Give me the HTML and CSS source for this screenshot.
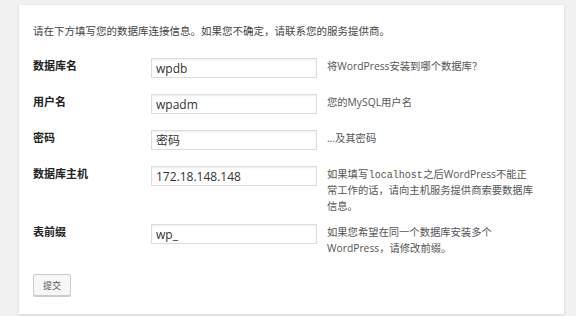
FILE: index.html
```html
<!DOCTYPE html>
<html lang="zh-CN">
<head>
    <meta charset="UTF-8">
    <title>WordPress › 安装配置文件</title>
    <link rel="stylesheet" href="styles.css">
</head>
<body>
    <div class="setup-box">
        <p class="intro">请在下方填写您的数据库连接信息。如果您不确定，请联系您的服务提供商。</p>

        <form class="setup-form">
            <div class="form-table">
                <label class="field-label" for="dbname">数据库名</label>
                <input class="field-input" id="dbname" type="text" value="wpdb">
                <div class="field-desc">将WordPress安装到哪个数据库？</div>

                <label class="field-label" for="uname">用户名</label>
                <input class="field-input" id="uname" type="text" value="wpadm">
                <div class="field-desc">您的MySQL用户名</div>

                <label class="field-label" for="pwd">密码</label>
                <input class="field-input" id="pwd" type="text" value="密码">
                <div class="field-desc">…及其密码</div>

                <label class="field-label" for="dbhost">数据库主机</label>
                <input class="field-input" id="dbhost" type="text" value="172.18.148.148">
                <div class="field-desc">如果填写<code>localhost</code>之后WordPress不能正常工作的话，请向主机服务提供商索要数据库信息。</div>

                <label class="field-label" for="prefix">表前缀</label>
                <input class="field-input" id="prefix" type="text" value="wp_">
                <div class="field-desc">如果您希望在同一个数据库安装多个WordPress，请修改前缀。</div>
            </div>

            <button class="submit-btn" type="submit">提交</button>
        </form>
    </div>
</body>
</html>
```

FILE: styles.css
```css
/* Page */
body {
    margin: 0;
    padding: 5px 12px 2px 19px;
    background-color: #f1f1f1;
    font-family: "Open Sans", "Noto Sans CJK SC", sans-serif;
    color: #444;
}

.setup-box {
    background-color: #fff;
    padding: 18px 14px 18px 14px;
    box-shadow: 0 1px 3px rgba(0,0,0,0.13);
    height: 273px;
}

.intro {
    margin: 0 0 19px 0;
    font-size: 10.5px;
    line-height: 16px;
    color: #444;
}

/* Form rows */
.form-table {
    display: grid;
    grid-template-columns: 108px 166px 207px;
    column-gap: 10px;
    row-gap: 10px;
    align-items: start;
}

.field-label {
    font-size: 11px;
    line-height: 16px;
    font-weight: bold;
    color: #222;
}

.field-input {
    box-sizing: border-box;
    width: 166px;
    height: 20px;
    margin: 0 0 6px 0;
    padding: 0 4px;
    border: 1px solid #ddd;
    box-shadow: inset 0 1px 2px rgba(0,0,0,0.07);
    font-family: "Open Sans", "Noto Sans CJK SC", sans-serif;
    font-size: 12px;
    color: #333;
    outline: none;
}

.field-desc {
    font-size: 10.3px;
    line-height: 16px;
    color: #555;
}

.field-desc code {
    margin: 0 0.5px;
    font-family: "Liberation Mono", "DejaVu Sans Mono", monospace;
    font-size: 10px;
    line-height: 1;
}

/* Button */
.submit-btn {
    margin-top: 18px;
    width: 38px;
    height: 22px;
    padding: 0;
    background: #f7f7f7;
    border: 1px solid #ccc;
    border-radius: 2px;
    box-shadow: 0 1px 0 #ccc;
    font-family: "Noto Sans CJK SC", sans-serif;
    font-size: 9px;
    color: #555;
}
```
